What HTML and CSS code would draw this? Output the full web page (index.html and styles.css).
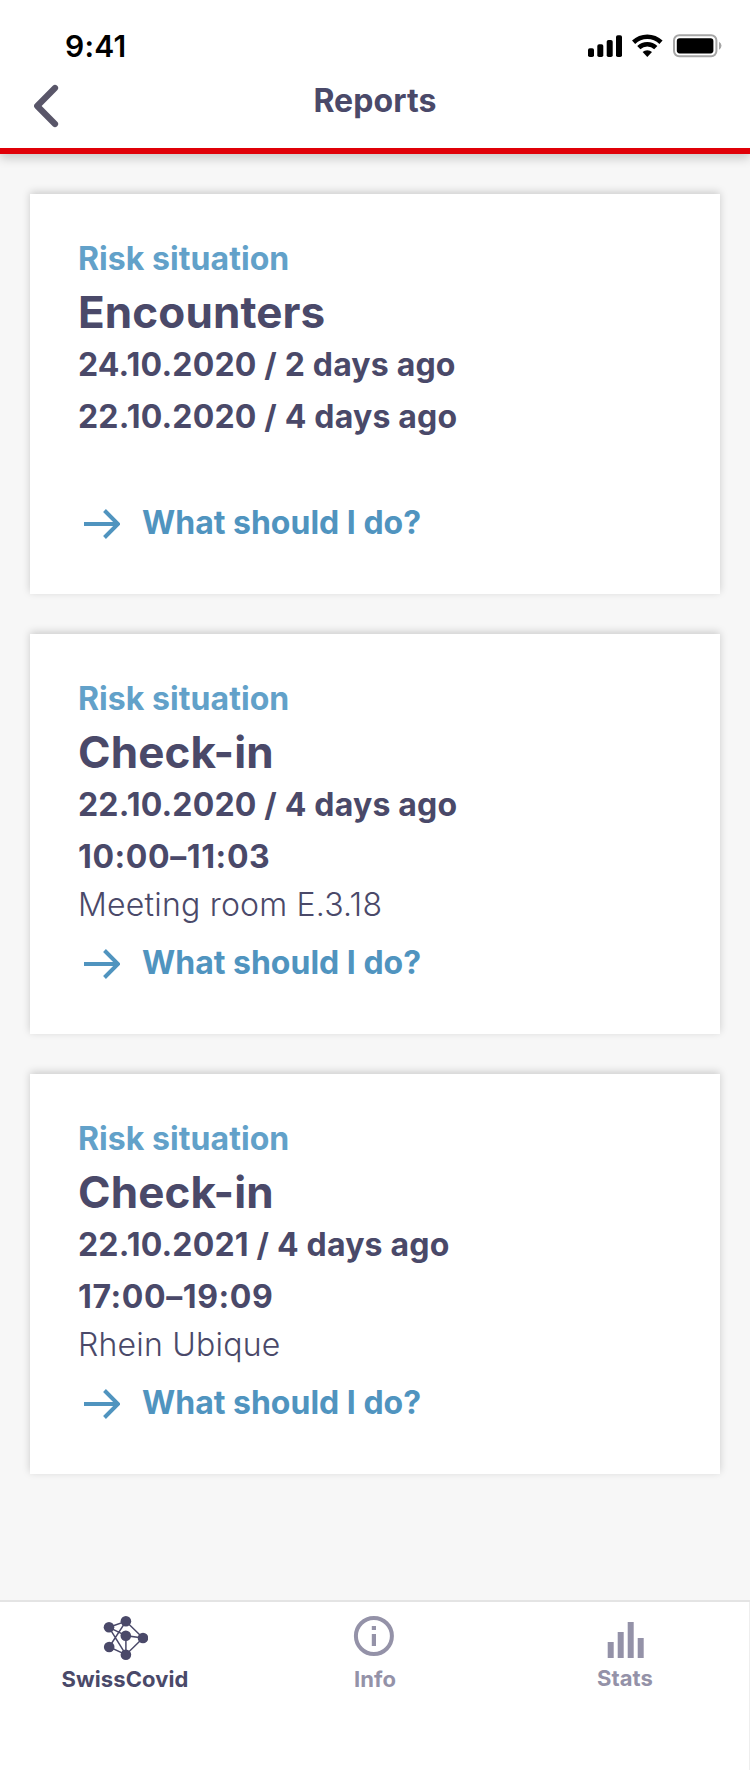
FILE: index.html
```html
<!DOCTYPE html>
<html lang="en">
<head>
<meta charset="utf-8">
<title>Reports</title>
<link rel="stylesheet" href="styles.css">
</head>
<body>
<svg class="defs" width="0" height="0" aria-hidden="true">
  <symbol id="arrow" viewBox="0 0 36 32">
    <path d="M0 16H33M20.5 2.5L34 16L20.5 29.5" fill="none" stroke="currentColor" stroke-width="4"/>
  </symbol>
</svg>
<div class="screen">
  <header class="header">
    <div class="status">
      <span class="clock">9:41</span>
      <svg class="status-icons" width="136" height="26" viewBox="0 0 136 26">
        <rect x="0" y="15.3" width="6" height="8.7" rx="1.8"/>
        <rect x="9.3" y="11.3" width="6" height="12.7" rx="1.8"/>
        <rect x="18.7" y="6.9" width="6" height="17.1" rx="1.8"/>
        <rect x="28" y="2.2" width="6" height="21.8" rx="1.8"/>
        <path d="M45.6 9.2A20 20 0 0 1 73 9.2M50.8 14.6A12.3 12.3 0 0 1 67.8 14.6" fill="none" stroke="#000" stroke-width="4.6"/>
        <path d="M59.3 24L54.6 19.1A7 7 0 0 1 64 19.1Z"/>
        <rect x="86" y="2.2" width="42.4" height="21" rx="5.2" fill="none" stroke="#a6a6a6" stroke-width="2"/>
        <rect x="88.8" y="5.2" width="36.6" height="15.2" rx="2.8"/>
        <path d="M131 8.8Q133.5 10.2 133.5 12.7T131 16.8Z" fill="#a6a6a6"/>
      </svg>
    </div>
    <div class="bar">
      <svg class="back" width="26" height="44" viewBox="0 0 26 44">
        <path d="M22 4L4.2 22L22 40" fill="none" stroke="#595669" stroke-width="6.2" stroke-linecap="round" stroke-linejoin="round"/>
      </svg>
      <h1 class="heading">Reports</h1>
    </div>
  </header>
  <main class="list">
    <section class="card">
      <p class="kind">Risk situation</p>
      <h2 class="title">Encounters</h2>
      <p class="date">24.10.2020 / 2 days ago</p>
      <p class="date second">22.10.2020 / 4 days ago</p>
      <a class="link"><svg class="arrow" width="36" height="32"><use href="#arrow"/></svg><span>What should I do?</span></a>
    </section>
    <section class="card">
      <p class="kind">Risk situation</p>
      <h2 class="title">Check-in</h2>
      <p class="date">22.10.2020 / 4 days ago</p>
      <p class="time">10:00–11:03</p>
      <p class="place">Meeting room E.3.18</p>
      <a class="link"><svg class="arrow" width="36" height="32"><use href="#arrow"/></svg><span>What should I do?</span></a>
    </section>
    <section class="card">
      <p class="kind">Risk situation</p>
      <h2 class="title">Check-in</h2>
      <p class="date">22.10.2021 / 4 days ago</p>
      <p class="time">17:00–19:09</p>
      <p class="place">Rhein Ubique</p>
      <a class="link"><svg class="arrow" width="36" height="32"><use href="#arrow"/></svg><span>What should I do?</span></a>
    </section>
  </main>
  <nav class="tabs">
    <div class="tab active">
      <svg width="46" height="46" viewBox="0 0 46 46">
        <path d="M7 12.3L23.9 6.3L41 23L23.9 39.7L7.2 32L23.9 6.3M7 12.3L23.9 39.7V20.7L41 23M7 12.3L23.8 20.7" fill="none" stroke="currentColor" stroke-width="1.5"/>
        <g fill="currentColor"><circle cx="7" cy="12.3" r="5.3"/><circle cx="23.9" cy="6.3" r="5.3"/><circle cx="41" cy="23" r="5.3"/><circle cx="23.8" cy="20.7" r="5.3"/><circle cx="7.2" cy="32" r="5.3"/><circle cx="23.9" cy="39.7" r="5.3"/></g>
      </svg>
      <span class="label">SwissCovid</span>
    </div>
    <div class="tab">
      <svg width="46" height="46" viewBox="0 0 46 46">
        <circle cx="21.9" cy="21" r="18" fill="none" stroke="currentColor" stroke-width="4"/>
        <path d="M19.8 11H24v4h-4.2zM19.8 19H24v12h-4.2z" fill="currentColor"/>
      </svg>
      <span class="label">Info</span>
    </div>
    <div class="tab stats">
      <svg width="46" height="46" viewBox="0 0 46 46">
        <path d="M5.7 27h6v16h-6zM15.7 17h6v26h-6zM25.7 7h6v36h-6zM35.7 23h6v20h-6z" fill="currentColor"/>
      </svg>
      <span class="label">Stats</span>
    </div>
  </nav>
</div>
</body>
</html>
```
FILE: styles.css
```css
* { box-sizing: border-box; }
body { margin: 0; background: #f7f7f7; color: #4a4969; font-family: Inter, "Liberation Sans", sans-serif; }
h1, h2, p { margin: 0; }
.defs { display: block; }
.screen { width: 750px; height: 1770px; display: flex; flex-direction: column; overflow: hidden; }

.header { height: 154px; flex: none; background: #fff; border-bottom: 6px solid #e00008; box-shadow: 0 4px 10px rgba(0,0,0,.2); }
.status { height: 80px; display: flex; justify-content: space-between; padding: 28px 26px 0 65px; }
.clock { font-size: 30px; line-height: 36px; font-weight: 600; letter-spacing: .2px; color: #000; }
.status-icons { margin-top: 5px; }
.bar { display: grid; grid-template-columns: 80px 1fr 80px; height: 68px; }
.back { margin: 4px 0 0 33px; }
.heading { font-size: 32px; line-height: 39px; font-weight: 700; letter-spacing: .1px; text-align: center; margin-top: 1px; }

.list { flex: 1; display: flex; flex-direction: column; gap: 40px; padding: 40px 30px 0; }
.card { height: 400px; flex: none; display: flex; flex-direction: column; background: #fff; padding: 45px 48px 52px; box-shadow: 0 -2px 8px rgba(0,0,0,.18); font-size: 32px; line-height: 39px; font-weight: 700; }
.kind { color: #62a1c9; letter-spacing: .06px; }
.title { font-size: 44px; line-height: 54px; margin-top: 7px; letter-spacing: .1px; }
.date { margin-top: 6px; letter-spacing: .19px; }
.second, .time { margin-top: 13px; }
.time { letter-spacing: .6px; }
.place { margin-top: 9px; font-weight: 300; letter-spacing: .21px; }
.link { display: flex; margin-top: auto; color: #5094bf; }
.arrow { margin: 5px 22px 0 6px; }

.tabs { height: 170px; flex: none; display: grid; grid-template-columns: repeat(3, 1fr); background: #fff; border-top: 2px solid #e4e4e4; box-shadow: inset -1px 0 #eee; }
.tab { display: flex; flex-direction: column; align-items: center; padding-top: 13px; color: #9492a8; }
.active { color: #4a4969; }
.label { font-size: 22px; line-height: 27px; font-weight: 700; letter-spacing: .1px; margin-top: 5px; }
.stats .label { margin-top: 4px; }
```
